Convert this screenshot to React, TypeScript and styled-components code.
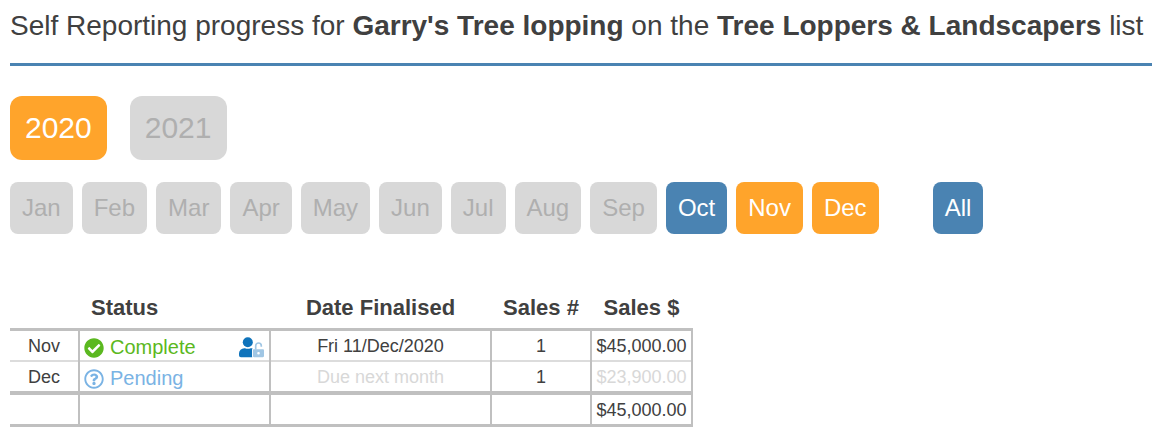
import React from "react";
import styled, { createGlobalStyle, css } from "styled-components";
import { FaCheckCircle, FaRegQuestionCircle } from "react-icons/fa";

const GlobalStyle = createGlobalStyle`
  body {
    margin: 0;
    background: #ffffff;
    color: #404040;
    font-family: "Liberation Sans", Arial, Helvetica, sans-serif;
  }
`;

type Tone = "muted" | "active" | "partial";

const tones = {
  muted: css`
    background: #d8d8d8;
    color: #afafaf;
  `,
  active: css`
    background: #4a83b2;
    color: #ffffff;
  `,
  partial: css`
    background: #ffa42b;
    color: #ffffff;
  `,
};

const Page = styled.main`
  padding-left: 10px;
`;

const Title = styled.h1`
  margin: 0;
  padding: 9px 0 21px;
  border-bottom: 3px solid #4a83b2;
  font-size: 28px;
  line-height: 33px;
  font-weight: 400;
`;

const YearBar = styled.nav`
  display: flex;
  flex-wrap: wrap;
  gap: 23px;
  margin-top: 30px;
`;

const MonthBar = styled.nav`
  display: flex;
  flex-wrap: wrap;
  gap: 9px;
  margin-top: 22px;
`;

const PeriodButton = styled.button<{ $tone: Tone }>`
  border: 0;
  font-family: inherit;
  cursor: pointer;
  ${({ $tone }) => tones[$tone]}
`;

const YearButton = styled(PeriodButton)`
  padding: 0 15px;
  border-radius: 12px;
  font-size: 30px;
  line-height: 64px;
`;

const MonthButton = styled(PeriodButton)`
  padding: 0 12px;
  border-radius: 8px;
  font-size: 24px;
  line-height: 52px;
`;

const AllButton = styled(MonthButton)`
  margin-left: 45px;
`;

const Report = styled.table`
  margin-top: 60px;
  border-collapse: collapse;
  font-size: 18px;
  line-height: 27px;

  tbody {
    border-top: 3px solid #c0c0c0;
  }

  tfoot {
    border-top: 4px solid #c0c0c0;
    border-bottom: 3px solid #c0c0c0;
  }

  tbody tr + tr {
    border-top: 2px solid #dcdcdc;
  }
`;

const Column = styled.col<{ $width: number }>`
  width: ${({ $width }) => $width}px;
`;

const Heading = styled.th<{ $align?: "left" | "center" }>`
  padding: 0 0 7px ${({ $align }) => ($align === "left" ? 12 : 0)}px;
  font-size: 22px;
  text-align: ${({ $align = "center" }) => $align};
`;

const Cell = styled.td<{ $faded?: boolean }>`
  padding: 2px 0 0;
  border-right: 2px solid #c0c0c0;
  text-align: center;
  vertical-align: top;
  color: ${({ $faded }) => ($faded ? "#d8d8d8" : "inherit")};
`;

const MonthCell = styled.th`
  padding: 2px 0 0;
  border-right: 2px solid #c0c0c0;
  font-weight: 400;
  vertical-align: top;
`;

const Status = styled.div<{ $color: string }>`
  display: flex;
  align-items: center;
  gap: 6px;
  padding: 2px 5px 0 4px;
  font-size: 20px;
  line-height: 25px;
  color: ${({ $color }) => $color};
`;

const UnlockedUser = styled.svg`
  margin-left: auto;
`;

const months: { name: string; tone: Tone }[] = [
  { name: "Jan", tone: "muted" },
  { name: "Feb", tone: "muted" },
  { name: "Mar", tone: "muted" },
  { name: "Apr", tone: "muted" },
  { name: "May", tone: "muted" },
  { name: "Jun", tone: "muted" },
  { name: "Jul", tone: "muted" },
  { name: "Aug", tone: "muted" },
  { name: "Sep", tone: "muted" },
  { name: "Oct", tone: "active" },
  { name: "Nov", tone: "partial" },
  { name: "Dec", tone: "partial" },
];

function UserUnlockIcon() {
  return (
    <UnlockedUser width="25" height="22" viewBox="0 1 25 22" role="img" aria-label="Unlocked by user">
      <circle cx="8.8" cy="6.2" r="5" fill="#0f73bb" />
      <path
        d="M5.3 12.2h.7a6.8 6.8 0 0 0 5.6 0h.7c.5 0 .9.1 1.3.2-.4.4-.6.9-.6 1.5v6.2c0 .4.1.8.3 1.1H1.9A1.9 1.9 0 0 1 0 19.3v-1.800a5.3 5.3 0 0 1 5.3-5.3z"
        fill="#0f73bb"
      />
      <path
        fillRule="evenodd"
        d="M15 13.300h8.900c.6 0 1.100.5 1.100 1.100v5.700c0 .6-.5 1.100-1.100 1.100H15c-.6 0-1.100-.5-1.100-1.100v-5.700c0-.6.5-1.100 1.100-1.100zm4.500 2.600a1.300 1.300 0 1 0 0 2.600 1.300 1.300 0 0 0 0-2.600z"
        fill="#a0c6e4"
      />
      <path d="M16.700 13.600V9.800a2.800 2.800 0 0 1 5.600 0v1" fill="none" stroke="#a0c6e4" strokeWidth="1.700" />
    </UnlockedUser>
  );
}

export default function App() {
  return (
    <>
      <GlobalStyle />
      <Page>
        <Title>
          Self Reporting progress for <strong>Garry's Tree lopping</strong> on the{" "}
          <strong>Tree Loppers &amp; Landscapers</strong> list
        </Title>

        <YearBar aria-label="Year">
          <YearButton type="button" $tone="partial">2020</YearButton>
          <YearButton type="button" $tone="muted">2021</YearButton>
        </YearBar>

        <MonthBar aria-label="Month">
          {months.map(({ name, tone }) => (
            <MonthButton key={name} type="button" $tone={tone}>{name}</MonthButton>
          ))}
          <AllButton type="button" $tone="active">All</AllButton>
        </MonthBar>

        <Report>
          <colgroup>
            <Column $width={69} />
            <Column $width={191} />
            <Column $width={221} />
            <Column $width={100} />
            <Column $width={101} />
          </colgroup>
          <thead>
            <tr>
              <td />
              <Heading scope="col" $align="left">Status</Heading>
              <Heading scope="col">Date Finalised</Heading>
              <Heading scope="col">Sales #</Heading>
              <Heading scope="col">Sales $</Heading>
            </tr>
          </thead>
          <tbody>
            <tr>
              <MonthCell scope="row">Nov</MonthCell>
              <Cell>
                <Status $color="#5bb820">
                  <FaCheckCircle size={20} aria-hidden />
                  Complete
                  <UserUnlockIcon />
                </Status>
              </Cell>
              <Cell>Fri 11/Dec/2020</Cell>
              <Cell>1</Cell>
              <Cell>$45,000.00</Cell>
            </tr>
            <tr>
              <MonthCell scope="row">Dec</MonthCell>
              <Cell>
                <Status $color="#7ab3e4">
                  <FaRegQuestionCircle size={20} aria-hidden />
                  Pending
                </Status>
              </Cell>
              <Cell $faded>Due next month</Cell>
              <Cell>1</Cell>
              <Cell $faded>$23,900.00</Cell>
            </tr>
          </tbody>
          <tfoot>
            <tr>
              <Cell />
              <Cell />
              <Cell />
              <Cell />
              <Cell>$45,000.00</Cell>
            </tr>
          </tfoot>
        </Report>
      </Page>
    </>
  );
}
